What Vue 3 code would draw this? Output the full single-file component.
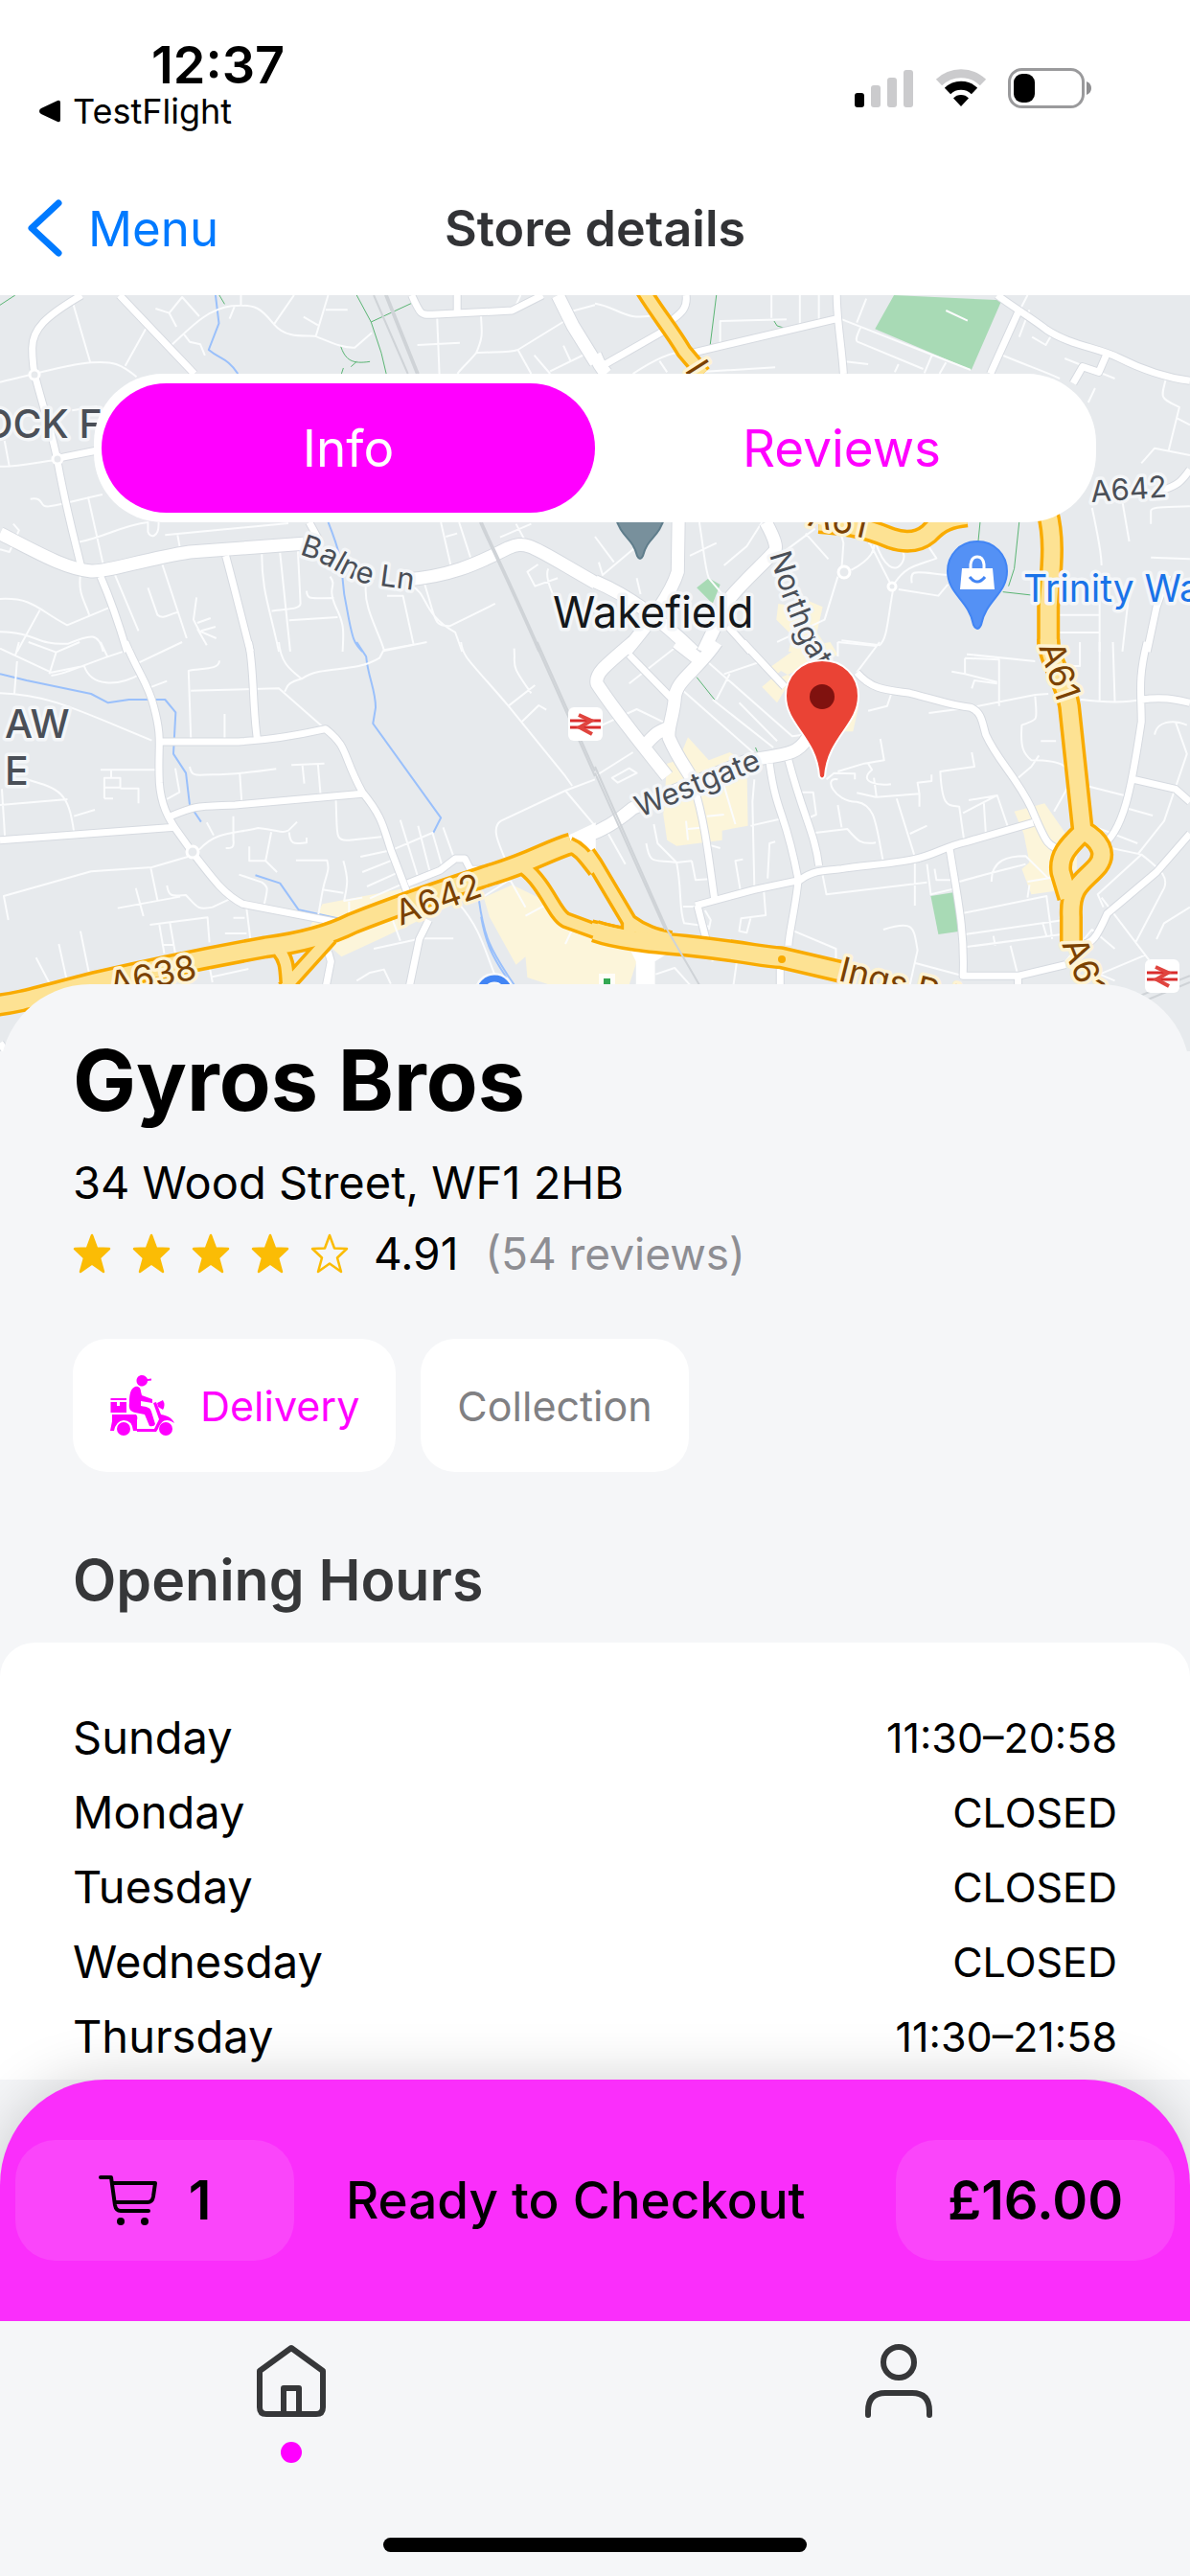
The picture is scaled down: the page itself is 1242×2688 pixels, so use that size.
<template>
  <div class="page">
    <header class="status-bar">
      <div class="status-left">
        <div class="clock">12:37</div>
        <a class="back-app" href="#">
          <svg width="24" height="24" viewBox="0 0 24 24"><path d="M1 12Q1 10 3 9L20 1Q23 0 23 3V21Q23 24 20 23L3 15Q1 14 1 12Z" fill="#000" /></svg>
          TestFlight
        </a>
      </div>
      <div class="status-icons">
        <svg width="62" height="42" viewBox="0 0 62 42">
          <rect x="0" y="26" width="10" height="15" rx="3" fill="#000" />
          <rect x="17" y="18" width="10" height="23" rx="3" fill="#cbcbcd" />
          <rect x="34" y="10" width="10" height="31" rx="3" fill="#cbcbcd" />
          <rect x="51" y="2" width="10" height="39" rx="3" fill="#cbcbcd" />
        </svg>
        <svg width="54" height="42" viewBox="0 0 54 42" fill="none">
          <path d="M4 15A33 33 0 0 1 50 15" stroke="#cbcbcd" stroke-width="9" />
          <path d="M13 24A20 20 0 0 1 41 24" stroke="#000" stroke-width="9" />
          <path d="M27 40L19 31.500A11 11 0 0 1 35 31.500Z" fill="#000" />
        </svg>
        <svg width="88" height="44" viewBox="0 0 88 44">
          <rect x="1.500" y="2.500" width="77" height="39" rx="13" fill="none" stroke="#9a9a9c" stroke-width="3" />
          <rect x="6" y="7" width="22" height="30" rx="9" fill="#000" />
          <path d="M82 15Q87 17 87 22Q87 27 82 29Z" fill="#8e8e90" />
        </svg>
      </div>
    </header>

    <nav class="nav-bar">
      <a class="nav-back" href="#">
        <svg width="36" height="60" viewBox="0 0 36 60"><path d="M32 4L4 30L32 56" fill="none" stroke="#007aff" stroke-width="7" stroke-linecap="round" stroke-linejoin="round" /></svg>
        Menu
      </a>
      <h1 class="nav-title">Store details</h1>
    </nav>

    <section class="map">
      <svg class="map-canvas" viewBox="0 0 1242 789" preserveAspectRatio="xMidYMin slice">
        <g v-for="(tile, i) in tiles" :key="'area' + i" :transform="tile.at">
          <path :d="tile.shops" fill="#fcf5da" />
          <path :d="tile.parks" fill="#a8dab5" />
          <path :d="tile.water" class="line water" />
          <path :d="tile.paths" class="line path" />
          <path :d="tile.minor" class="line minor" />
        </g>
        <g v-for="(tile, i) in tiles" :key="'edge' + i" :transform="tile.at">
          <path :d="tile.streets" class="line street-edge" />
          <path :d="tile.avenues" class="line avenue-edge" />
        </g>
        <g v-for="(tile, i) in tiles" :key="'street' + i" :transform="tile.at">
          <path :d="tile.streets" class="line street" />
          <path :d="tile.avenues" class="line avenue" />
          <path :d="tile.blocks" fill="#fff" />
        </g>
        <g v-for="(tile, i) in tiles" :key="'casing' + i" :transform="tile.at">
          <path :d="tile.slips" class="line slip-edge" />
          <path :d="tile.mains" class="line main-edge" />
        </g>
        <g v-for="(tile, i) in tiles" :key="'main' + i" :transform="tile.at">
          <path :d="tile.slips" class="line slip" />
          <path :d="tile.mains" class="line main" />
          <path :d="tile.rail" class="line rail" />
        </g>

        <!-- roundabouts -->
        <g fill="#e7eaed" stroke="#fff" stroke-width="3">
          <circle cx="36" cy="83" r="5" />
          <circle cx="60" cy="171" r="5" />
          <circle cx="201" cy="581" r="6" />
          <circle cx="881" cy="289" r="6" />
          <circle cx="931" cy="304" r="4" />
        </g>
        <circle cx="816" cy="693" r="4" fill="#f9ab00" />

        <g class="labels">
          <text x="-18" y="149" class="district">OCK F</text>
          <text x="5" y="462" class="district">AW</text>
          <text x="5" y="511" class="district">E</text>
          <path id="balne" d="M312 271C340 276 358 298 388 302L440 309" fill="none" />
          <text class="street-name"><textPath href="#balne">Balne Ln</textPath></text>
          <path id="northgate" d="M803 271L817 316L834 360L858 400" fill="none" />
          <text class="street-name"><textPath href="#northgate">Northgate</textPath></text>
          <text transform="translate(1139 216) rotate(-4)" class="street-name">A642</text>
          <text transform="translate(668 545) rotate(-22)" class="street-name">Westgate</text>
          <text transform="translate(714 78) rotate(58)" class="road-name">Leeds Rd</text>
          <text transform="translate(842 240) rotate(13)" class="road-name">A61</text>
          <text transform="translate(1084 367) rotate(71)" class="road-name">A61</text>
          <text transform="translate(1108 677) rotate(68)" class="road-name">A61</text>
          <text transform="translate(418 658) rotate(-20)" class="road-name">A642</text>
          <text transform="translate(117 732) rotate(-12)" class="road-name">A638</text>
          <text transform="translate(874 715) rotate(14)" class="road-name">Ings Rd</text>
          <text x="577" y="347" class="town">Wakefield</text>
          <text x="1068" y="320" class="place">Trinity Walk</text>
        </g>

        <!-- railway stations -->
        <g v-for="s in stations" :key="s" :transform="s">
          <rect width="36" height="35" rx="6" fill="#fff" />
          <path d="M2 14H34M2 21H34" stroke="#d92c2c" stroke-width="3" />
          <path d="M11 8L24 14L12 21L25 28" fill="none" stroke="#e0443e" stroke-width="4" />
        </g>

        <circle cx="516" cy="728" r="21" fill="#fff" opacity="0.700" />
        <circle cx="516" cy="728" r="15" fill="none" stroke="#4285f4" stroke-width="7" />
        <rect x="625" y="708" width="17" height="17" fill="#fff" opacity="0.800" />
        <rect x="630" y="713" width="7" height="8" fill="#34a853" />

        <path d="M642 230H694C688 254 676 252 671 272Q668 278 665 272C660 252 648 254 642 230Z" fill="#78909c" stroke="#5f7d8b" stroke-width="2" />

        <path d="M1020 257C1038 257 1051 271 1051 288C1051 312 1029 318 1024 344Q1020 352 1016 344C1011 318 989 312 989 288C989 271 1002 257 1020 257Z" fill="#5491f5" stroke="#4285f4" stroke-width="2" />
        <path d="M1004 285H1036L1038 307H1002Z" fill="#fff" />
        <path d="M1013 286V281Q1014 273 1020 273Q1026 273 1027 281V286" fill="none" stroke="#fff" stroke-width="3" />
        <path d="M1012 294Q1020 304 1028 294" fill="none" stroke="#4285f4" stroke-width="3" />

        <path d="M858 381C880 381 896 397 896 418C896 449 864 461 861 502Q858 507 855 502C852 461 820 449 820 418C820 397 836 381 858 381Z" fill="#ea4335" stroke="#fff" stroke-width="2" />
        <circle cx="858" cy="419" r="13" fill="#80120f" />
      </svg>

      <div class="tabs">
        <button
          v-for="tab in tabs"
          :key="tab"
          type="button"
          class="tab"
          :class="{ active: tab === activeTab }"
          @click="activeTab = tab"
        >{{ tab }}</button>
      </div>
    </section>

    <main class="sheet">
      <div class="store">
        <h2 class="store-name">Gyros Bros</h2>
        <p class="address">34 Wood Street, WF1 2HB</p>
        <div class="rating">
          <div class="stars">
            <svg v-for="n in 5" :key="n" width="40" height="42" viewBox="0 0 40 42">
              <path
                d="M20 2L25 15.500L38 16L28 25.500L32 40L20 31.500L8 40L12 25.500L2 16L15 15.500Z"
                :fill="n < 5 ? '#fbbc05' : 'none'"
                stroke="#fbbc05"
                stroke-width="2.500"
                stroke-linejoin="round"
              />
            </svg>
          </div>
          <span class="score">4.91</span>
          <span class="count">(54 reviews)</span>
        </div>
        <div class="chips">
          <button type="button" class="chip chip-active">
            <svg width="70" height="64" viewBox="0 0 70 64" fill="#f0f">
              <path d="M34 0C37 0 39 2 40 4L44 3.500V5.500L40 6C40 9 37 11.500 34 11.500C31 11.500 28.500 9 28.500 5.700S31 0 34 0Z" />
              <path d="M27 12C31 11 33 14 33 17L34 21L45 25L45 29L33 27V32C40 33 43 34 44 38L48 51Q47 54 42 53L37 41L27 39C22 38 20 35 21 29C21 20 22 14 27 12Z" />
              <path d="M46 29L49 28L54 41C61 42 66 45 68 50C60 44 54 47 51 56L49 59H29V56H47L52 46Z" />
              <path d="M50 29L56 26Q59 31 56 36L51 33Z" />
              <path d="M1.500 24H18V26H1.500ZM1.500 28H8V32H11V28H18V39H1.500Z" />
              <path d="M3 41H28Q30 43 29 47V58H25Q24 47 15 47Q7 48 5 58H1L3 48Z" />
              <circle cx="15" cy="56" r="7" />
              <circle cx="59" cy="56" r="7" />
            </svg>
            Delivery
          </button>
          <button type="button" class="chip">Collection</button>
        </div>
        <h3 class="hours-title">Opening Hours</h3>
      </div>

      <div class="hours-card">
        <table class="hours">
          <tbody>
            <tr v-for="row in hours" :key="row.day">
              <th scope="row">{{ row.day }}</th>
              <td>{{ row.time }}</td>
            </tr>
          </tbody>
        </table>
      </div>

      <button type="button" class="checkout">
        <span class="checkout-box">
          <svg width="62" height="54" viewBox="0 0 62 54" fill="none" stroke="#000" stroke-width="4" stroke-linecap="round" stroke-linejoin="round">
            <path d="M2 3H13L17 32Q18 38 23 38H52" />
            <path d="M14 9H59L57 23Q56 29 51 29H17" />
            <circle cx="23" cy="49" r="4" fill="#000" stroke="none" />
            <circle cx="48" cy="49" r="4" fill="#000" stroke="none" />
          </svg>
          1
        </span>
        <span class="checkout-label">Ready to Checkout</span>
        <span class="checkout-box">£16.00</span>
      </button>
    </main>

    <footer class="tab-bar">
      <div class="tab-links">
        <a href="#" aria-label="Home">
          <svg width="72" height="78" viewBox="0 0 72 78" fill="none" stroke="#363739" stroke-width="6" stroke-linejoin="round">
            <path d="M3 28L36 4L69 28V66Q69 73 62 73H10Q3 73 3 66Z" />
            <path d="M28 73V46H44V73" />
          </svg>
          <span class="dot"></span>
        </a>
        <a href="#" aria-label="Account">
          <svg width="72" height="78" viewBox="0 0 72 78" fill="none" stroke="#363739" stroke-width="6" stroke-linecap="round">
            <circle cx="36" cy="19" r="16" />
            <path d="M4 74V70Q4 51 22 51H50Q68 51 68 70V74" />
          </svg>
        </a>
      </div>
      <div class="home-indicator"></div>
    </footer>
  </div>
</template>

<script setup>
import { ref } from 'vue'

const tabs = ['Info', 'Reviews']
const activeTab = ref('Info')

const hours = [
  { day: 'Sunday', time: '11:30–20:58' },
  { day: 'Monday', time: 'CLOSED' },
  { day: 'Tuesday', time: 'CLOSED' },
  { day: 'Wednesday', time: 'CLOSED' },
  { day: 'Thursday', time: '11:30–21:58' },
]

const stations = ['translate(593 430)', 'translate(1195 693)']

// the map is cut into four tiles, each drawn in its own 1568 x 1140 grid
const tiles = [
  {
    at: 'translate(0 -8) scale(0.396 0.3333)',
    water: 'M568 24L577 112L550 195C580 225 600 220 627 270 M865 735C920 900 890 880 915 1010C930 1110 935 1115 955 1140',
    paths: 'M0 55L40 24 M940 24L978 108L1087 48 M978 108L1005 205L1018 270 M897 180C910 230 930 240 975 232 M940 232L925 248 M905 252L900 270 M578 24L592 52',
    minor: 'M192 48L238 235 M0 296C80 275 180 240 240 235S320 240 360 280 M330 245L384 130 M410 66L446 80L480 30L525 90 M446 80L465 123 M445 188C500 130 540 70 610 58C680 50 690 70 722 115S800 150 830 152C870 170 900 190 935 188L980 142 M722 115L775 24 M800 92L838 118 M833 150L865 24 M858 70H916 M635 24V55 M484 145L500 170L528 178L540 213 M605 98L618 60 M1100 180L1212 173 M1152 90L1158 270 M1267 80C1270 140 1275 150 1255 205C1230 240 1210 260 1206 270 M1255 205C1290 200 1340 206 1365 195L1488 105 M1365 195L1400 270 M1360 55L1372 24 M1408 212L1450 270 M1485 182L1503 228 M1540 210L1450 262 M1505 75L1568 55 M12 480L25 562 M0 560C60 562 100 545 150 540 M80 662C120 655 100 690 130 685C180 675 220 660 270 648 M190 385L256 372 M232 655L272 868 M208 797C280 780 320 745 390 735V765C395 785 420 785 418 735 M435 775L760 738 M468 775L475 820 M0 820L25 828L50 760L35 740 M303 900L365 1075 M428 868L492 1098 M390 940L415 1025C430 1040 440 1025 467 1017 M212 900C205 960 225 985 235 1025 M0 975C90 970 100 1010 177 1057L292 1000 M105 1010L45 1140 M0 1078C100 1080 90 1120 180 1115C240 1085 260 1080 272 1140 M518 970L510 1040L525 1075 M520 1050L555 1035 M530 1075L568 1062 M525 1075L570 1098 M520 1068L545 1120 M690 835C690 950 710 1000 735 1140 M738 830L765 1140 M785 820L792 990C790 1010 750 1005 716 1013 M762 1042L890 1032 M808 950C810 980 820 972 880 972 M870 905C890 940 860 930 885 1000C910 1060 905 1080 903 1140 M965 925C955 1000 1000 1080 1012 1135L1090 1118L1062 965H1020 M1118 925C1150 1040 1140 1060 1185 1060L1305 990 M1085 935C1130 960 1110 1020 1200 1080L1218 1140 M1162 735L1188 870 M1210 735L1240 845 M1175 780L1205 770 M1318 782L1400 740 M1360 740L1385 795 M1418 867L1390 890L1410 935L1470 910 M1445 880C1430 920 1480 1010 1500 1060',
    streets: 'M215 24C120 90 85 130 85 190C85 230 90 270 93 280C120 400 140 470 150 535C175 700 195 780 215 880 M315 24L512 270 M150 535L256 510 M265 905C300 1000 320 1080 335 1140 M595 840C620 950 640 1050 660 1140 M815 735L845 800 M1085 24C1110 90 1110 85 1140 85L1350 72L1430 24 M1205 24V72',
    avenues: 'M0 770C100 830 170 880 240 888C280 892 380 850 500 828L800 802 M1070 915C1180 905 1250 870 1340 815C1390 790 1400 810 1570 925 M1470 24L1510 120L1570 235',
    rail: 'M985 24L1075 270 M1015 24L1098 270 M1020 24L1103 270 M1265 735C1300 830 1320 870 1420 1140 M1270 735C1305 830 1325 870 1425 1140',
  },
  {
    at: 'translate(621 -8) scale(0.396 0.3333)',
    shops: 'M540 970L600 1000L585 1080L620 1140H510L520 1090L478 1040L483 990L540 1000Z',
    parks: 'M788 24L1072 40L992 258L738 130Z M300 910L330 930L310 990L268 940Z',
    paths: 'M320 24L303 185 M472 105L480 120L508 130 M1015 735L1010 795 M1118 735L1105 880L1090 935 M1075 953L1165 965',
    minor: 'M925 72L982 104 M0 50C60 60 80 110 160 85 M330 180V105L505 100 M465 24V95 M540 24V120 M590 24V105 M715 35L690 110 M640 95L990 258 M700 125C690 150 685 165 692 170L865 255 M660 232L720 240 M170 230L190 265 M100 270C150 230 200 200 240 200 M270 265L475 250 M800 240L790 265 M888 212L868 268 M925 235L908 270 M1070 210C1150 250 1180 260 1225 285 M1145 70L1118 155 M1152 155L1188 180L1205 145 M1140 24L1120 70 M1238 222L1370 285 M1505 285C1490 350 1490 345 1540 375L1512 510 M1535 410L1568 430 M1318 315L1300 360 M1440 550L1475 503L1568 525 M1390 670L1408 795 M1310 690C1330 800 1335 850 1335 870 M1465 740V700C1465 685 1500 688 1568 685 M1465 845L1568 850 M0 780L50 860 M10 860L20 900L130 790 M110 910L120 960 M275 735C290 850 290 880 300 910L350 980 M440 735L400 810L340 870 M250 840L320 800 M555 770L615 850 M495 830L580 755 M640 735L655 800L650 880 M640 905L605 1040L480 1110 M675 885C730 850 740 820 735 790 M705 755L780 930 M720 800C780 790 830 820 810 860S760 870 740 800 M790 925C820 870 850 870 900 848L870 795 M800 945L905 965L930 930 M785 950C770 1050 770 1100 750 1120L650 1105 M835 925C830 880 840 890 930 900 M1225 1025H1330 M1330 900V1140 M1225 1080H1330 M1410 930L1390 1140',
    streets: 'M240 24C245 70 220 85 200 105 M190 130L20 245 M255 205L640 97 M637 24C637 100 650 180 655 270 M1060 24C1100 60 1150 95 1190 132C1250 180 1330 190 1380 220S1490 280 1568 292 M1118 70L1042 270 M1260 300L1285 248L1328 265L1348 210 M350 1060L410 1140 M1510 900L1480 1000L1455 1140 M1490 636C1540 620 1550 600 1568 570',
    avenues: 'M0 210C10 240 15 250 30 270 M220 735L218 890C200 960 150 1040 80 1140 M450 735C480 800 480 820 470 830C440 870 390 920 350 980L285 1140 M0 920C60 950 150 1010 260 1140',
    slips: 'M128 10C170 90 200 130 235 200L285 270',
    mains: 'M1192 700C1215 800 1200 900 1195 1000V1140 M590 735C650 740 700 745 780 785C830 805 860 790 880 770C910 730 940 720 980 715',
  },
  {
    at: 'translate(0 362) scale(0.396 0.3333)',
    shops: 'M1275 800L1350 760L1420 800L1470 880L1570 920V1073H1450L1390 1050L1385 985L1360 1010L1290 860Z M850 820L1250 730V790L1000 930L900 985L815 895Z',
    water: 'M0 100L70 120L240 162L285 190L340 180H435L463 220L457 350L490 410L500 510L530 563 M940 0L965 45C970 110 990 150 990 205L983 255L1162 550L1142 597 M673 730L738 755L787 838L920 873 M1262 805C1275 920 1290 960 1355 1073 M1268 860C1280 940 1295 980 1335 1050',
    minor: 'M0 20L135 95L220 75 M50 0L40 45 M45 60L38 160 M75 0L148 32L130 100 M148 32L210 0 M265 0L283 45 M135 105C180 100 200 75 350 20 M222 75C240 140 310 140 370 100 M365 65L480 0 M395 142L440 122 M0 160C130 165 200 210 400 308 M503 300L497 90C520 80 580 90 578 58 M503 152L735 145L855 270 M592 225V305 M735 0C740 70 770 90 795 115C750 130 760 140 750 155 M795 115C850 70 930 100 1000 50L1010 28L1125 0 M1215 0C1220 50 1240 60 1340 200L1490 420L1508 450 M1340 200L1410 135 M1355 20C1360 80 1340 60 1400 160 M1375 250L1420 198L1440 212 M1568 430L1490 465L1320 560C1295 580 1310 620 1335 690 M1490 465L1568 575 M265 400H415 M293 400V425 M275 490V425H317V455H275 M317 458H365V505 M275 490H298 M462 395L473 470L440 492 M500 390C505 425 520 415 560 415S650 410 728 397 M632 412L637 500 M768 385L855 380 M797 385L802 443 M838 382L845 480 M0 510L178 492 M70 430C160 460 180 470 195 595 M195 545L250 525 M5 460L13 610 M525 650C570 590 620 600 680 582C740 590 740 600 760 590L783 563 M615 545V620C618 645 610 645 595 645 M545 565L563 605 M762 595C765 640 780 630 808 628V612 M715 595L700 685H657V640 M700 685L730 720 M885 490C890 600 880 625 920 620L1005 610 M780 683H862C870 720 860 720 850 780L838 860 M905 685C920 750 915 760 907 810L955 800 M850 775L905 785 M920 812V870 M630 728L690 752C710 770 705 770 695 830 M495 672L400 705L240 718L10 795L22 870 M397 705L415 808 M310 833L475 797 M358 770L378 858 M440 762C445 800 455 795 490 792C520 830 520 840 560 830L610 802 M395 885L547 862L552 940 M650 835L663 960 M593 912H650 M615 863H645 M420 885L433 975 M448 880L462 975 M430 948H458 M95 988L140 1090 M155 945L180 1080 M212 905L240 1068 M552 1015L560 1065 M560 1048L655 1023 M950 672L1030 652 M955 720L1035 682 M967 765L1048 722 M975 802L1065 755 M1055 557L1100 730 M1035 650L1140 597L1165 700 M1102 575L1132 715 M1168 580L1198 680 M985 840L1060 810 M985 960L1110 928H1195 M1035 870L1055 935 M1210 820C1270 900 1280 980 1315 1073 M1270 800L1355 735 M1340 735L1385 830 M1385 857L1435 825 M1490 945L1510 895 M940 1060L975 1035L1012 1025L1030 1070',
    streets: 'M330 0C370 110 390 130 405 200C430 310 415 320 420 440C425 520 450 560 460 580L505 655C560 740 590 790 640 820L880 875L900 890 M655 0C670 80 665 200 678 305 M422 312H610C700 310 790 290 858 272C920 330 900 350 955 470C1010 550 1010 580 1030 650L1075 790 M450 545C520 510 520 515 620 510L955 475 M0 620L460 580 M1075 755L1160 715L1200 678H1225L1240 712H1310 M865 970L872 1000L860 1073 M1130 870L1105 930L1080 1073 M0 1255L25 1300',
    blocks: 'M1480 615L1570 565V665Z',
    slips: 'M1380 705C1440 760 1460 850 1490 870L1570 905 M735 965C760 1000 755 1030 760 1085 M870 925L775 1050L750 1085 M1500 635C1530 650 1540 670 1570 715',
    mains: 'M-20 1138C50 1130 100 1110 250 1065C450 1010 560 985 700 955C800 940 880 910 930 880C1100 800 1250 745 1300 725C1400 690 1450 650 1505 632',
    rail: 'M1410 0L1568 420 M1416 0L1568 404',
  },
  {
    at: 'translate(621 362) scale(0.396 0.3333)',
    shops: 'M245 298L300 370L355 345L400 375L403 575L335 590V620L215 638L190 620L180 540L190 380L220 370Z M1105 530L1185 505L1235 590L1270 660V710L1210 780L1150 790L1125 710L1145 690L1130 600Z M440 140L480 190L520 110L490 90Z M460 80L530 20L620 0L640 40L490 110Z M640 230L695 200L680 280L655 280Z M0 930L100 950L110 1000L90 1073H0Z',
    parks: 'M885 795L948 783L962 905L905 915Z',
    paths: 'M268 110L315 180 M423 330L430 350',
    minor: 'M0 270L110 210L180 250 M90 130L230 0 M0 420L100 345 M45 425L90 395L110 410L60 440Z M300 65L520 295L548 290 M230 150L440 370 M310 180L470 330 M355 100L320 180 M440 60L340 100 M380 190L480 310 M640 0V45 M750 0L690 95 M640 0L740 12 M980 38L1160 60 M975 50L1065 55V200 M975 50V100L1060 125 M940 92L975 100 M993 145L1000 120L1060 130 M880 222L990 205L1160 165L1195 162 M1278 0V75H1250 M1365 0L1370 185 M1330 0V185 M1280 180C1350 190 1400 190 1440 180 M1160 170C1165 250 1170 240 1125 260C1120 330 1130 350 1150 370C1240 370 1250 390 1253 440L1210 530 M1175 310H1215 M1170 355L1150 390L1115 425 M752 303L762 370L710 380L640 405 M720 380L730 400C690 440 750 450 780 445 M735 425L742 485L855 475 M690 472L740 485 M640 430C600 420 630 500 690 500C740 510 740 570 760 690 M640 510L650 580 M575 598L665 585C690 620 700 635 740 628 M720 215L770 200L780 165 M610 430L630 410L685 412V430 M795 490L845 680 M830 600L875 575 M855 515V475L850 440L887 435V415 M993 345L1000 390L910 405C915 520 930 510 960 515L972 615 M970 535L1060 480L1088 578 M985 495L1060 480 M1025 505L1030 600 M545 470H575L583 540L560 552 M410 575L495 552 M420 430L415 500L420 765 M340 450L370 570 M240 560L245 620 M245 585L290 580 M295 545L340 540 M300 635L330 645 M135 630C145 700 155 680 215 690L255 685 M155 570L165 630L215 690C230 780 220 830 235 880L300 890 M255 685L265 745L300 742 M390 680L370 685L385 790 M475 625L460 630L455 740 M35 600L80 695 M232 828H270 M290 840L305 870L300 900 M410 865L400 910L380 905L385 865L450 855L445 780 M600 730L610 790L875 752 M843 685V825 M875 695L885 790L955 770 M895 710L900 745H950 M960 750C1050 720 1090 710 1135 695 M1045 750C1045 680 1090 670 1135 670L1195 740 M1140 750L1215 735 M965 850L1190 795L1205 930 M1145 760L1140 800 M975 915L1235 870 M975 955L1230 915 M1050 920L1055 950 M1095 950L1115 1045 M1180 880L1190 920 M760 900C840 870 840 890 850 965L830 1073 M845 1005L970 1045 M525 905L635 960V1000 M1340 640L1440 665C1500 720 1510 740 1500 770L1425 940 M1335 800L1460 995 M1340 830L1325 790L1440 665 M1400 520L1470 543 M1310 575L1430 630 M1295 450L1395 480 M1370 1060L1330 1040L1450 980 M1480 930L1500 880L1568 830 M1530 250L1560 350L1500 560L1430 665 M1475 290C1480 250 1520 240 1560 260 M1240 1000L1310 900L1370 960 M160 1040L210 1020L250 1073 M375 990L365 1073 M300 945L310 1000',
    streets: 'M90 40L205 180 M390 0L500 140 M690 95C730 150 770 150 830 160C900 180 940 200 990 205C1020 220 1020 250 1030 290C1060 370 1110 420 1150 520C1190 630 1190 640 1240 655 M1455 0C1430 120 1440 160 1440 250C1420 400 1400 600 1330 640 M1440 180C1500 170 1530 180 1568 190 M1420 430L1530 460L1568 500 M1568 600L1480 720L1350 850C1320 930 1310 940 1290 945 M460 380C480 550 500 520 535 740 M510 370C550 550 580 600 590 700 M265 825L420 775L540 745C580 710 620 715 650 710C700 700 780 695 840 680C900 665 920 640 980 625L1155 565 M535 750C530 820 510 920 510 950 M488 1020V1080 M270 825L295 940 M935 650C955 800 975 900 970 1045H1115L1240 1010 M1115 1045V1073 M260 450C290 560 300 680 315 805',
    avenues: 'M100 0C20 80 0 100 5 130C60 230 130 330 190 420 M215 0L280 60 M320 0C270 90 210 120 210 180C205 240 190 270 195 300C220 370 250 410 265 450 M200 265C160 280 150 300 130 325 M560 300C530 360 490 350 400 372L100 520C60 560 20 590 -20 605',
    blocks: 'M85 945L205 965L158 1000V1080H108V1000Z',
    slips: 'M-20 660L0 695L90 875V935 M-10 895L100 925 M90 875C130 910 160 920 200 930',
    mains: 'M0 905C60 930 150 940 240 950C400 970 440 985 490 988L660 1035 M1195 -10C1195 60 1240 120 1250 200L1285 590C1330 620 1350 660 1325 700C1290 750 1250 760 1255 860V960 M1285 595C1245 640 1222 670 1228 720L1248 800',
    rail: 'M0 390L190 900L275 1073 M0 410L185 900 M1430 1110L1568 1045 M1445 1125L1568 1065',
  },
]
</script>

<style>
body {
  background: #f5f6f8;
}
</style>

<style scoped>
.page {
  display: flex;
  flex-direction: column;
  min-height: 100vh;
  font-family: "Inter", "Liberation Sans", sans-serif;
  color: #000;
  background: #f5f6f8;
}
a {
  color: inherit;
  text-decoration: none;
}
button {
  border: 0;
  padding: 0;
  font: inherit;
  color: inherit;
  cursor: pointer;
}
h1,
h2,
h3,
p {
  margin: 0;
}

/* status bar */
.status-bar {
  display: flex;
  justify-content: space-between;
  align-items: flex-start;
  height: 128px;
  padding: 40px 102px 0 40px;
  background: #fff;
}
.clock {
  padding-left: 118px;
  font-size: 54px;
  font-weight: 600;
  line-height: 56px;
}
.back-app {
  display: flex;
  align-items: center;
  gap: 12px;
  font-size: 36px;
  line-height: 40px;
}
.status-icons {
  display: flex;
  align-items: center;
  gap: 22px;
  padding-top: 30px;
}

/* navigation bar */
.nav-bar {
  display: grid;
  grid-template-columns: 1fr auto 1fr;
  align-items: center;
  height: 140px;
  padding: 0 29px;
  background: #fff;
}
.nav-back {
  display: flex;
  align-items: center;
  gap: 27px;
  font-size: 51px;
  color: #007aff;
}
.nav-title {
  font-size: 52px;
  font-weight: 600;
  color: #323336;
}

/* map */
.map {
  position: relative;
  height: 707px;
  padding: 82px 98px 0;
  background: #e7eaed;
  overflow: hidden;
}
.map-canvas {
  position: absolute;
  inset: 0;
  width: 100%;
  height: 100%;
}
.line {
  fill: none;
  vector-effect: non-scaling-stroke;
  stroke-linejoin: round;
}
.water {
  stroke: #9ac0fb;
  stroke-width: 2px;
}
.path {
  stroke: #5bb574;
  stroke-width: 1px;
}
.minor {
  stroke: #fbfcfd;
  stroke-width: 2px;
}
.street-edge {
  stroke: #d6dae0;
  stroke-width: 9px;
}
.street {
  stroke: #fff;
  stroke-width: 7px;
}
.avenue-edge {
  stroke: #d6dae0;
  stroke-width: 15px;
}
.avenue {
  stroke: #fff;
  stroke-width: 13px;
}
.slip-edge {
  stroke: #f9ab00;
  stroke-width: 18px;
}
.slip {
  stroke: #fde293;
  stroke-width: 11px;
}
.main-edge {
  stroke: #f9ab00;
  stroke-width: 24px;
}
.main {
  stroke: #fde293;
  stroke-width: 17px;
}
.rail {
  stroke: #cfd3d7;
  stroke-width: 2px;
}
.labels text {
  paint-order: stroke;
  stroke: #f4f6f8;
  stroke-width: 7px;
  stroke-linejoin: round;
}
.labels .district {
  font-size: 41px;
  font-weight: 500;
  fill: #4a4f57;
}
.labels .street-name {
  font-size: 31px;
  fill: #4a4f57;
}
.labels .road-name {
  font-size: 36px;
  fill: #7a4100;
  stroke: #fef3d3;
}
.labels .town {
  font-size: 45px;
  fill: #15181b;
}
.labels .place {
  font-size: 39px;
  fill: #1a73e8;
}
.tabs {
  position: relative;
  display: flex;
  padding: 10px 8px;
  border-radius: 72px;
  background: #fff;
}
.tab {
  flex: 1;
  height: 135px;
  border-radius: 68px;
  font-size: 53px;
  color: #f0f;
  background: #fff;
}
.tab.active {
  color: #fff;
  background: #f0f;
}

/* sheet */
.sheet {
  position: relative;
  margin-top: -70px;
  border-radius: 94px 94px 0 0;
  background: #f5f6f8;
}
.store {
  padding: 46px 76px 25px;
}
.store-name {
  font-size: 88px;
  font-weight: 700;
  line-height: 108px;
}
.address {
  margin-top: 17px;
  font-size: 47px;
  line-height: 72px;
}
.rating {
  display: flex;
  align-items: center;
  margin-top: 6px;
  font-size: 46px;
  line-height: 64px;
}
.stars {
  display: flex;
  gap: 22px;
}
.score {
  margin-left: 26px;
}
.count {
  margin-left: 28px;
  color: #8e8e93;
}
.chips {
  display: flex;
  gap: 26px;
  margin-top: 57px;
}
.chip {
  display: flex;
  align-items: center;
  gap: 25px;
  height: 139px;
  padding: 0 38px;
  border-radius: 36px;
  font-size: 43px;
  color: #808083;
  background: #fff;
}
.chip-active {
  color: #f0f;
}
.hours-title {
  margin-top: 73px;
  font-size: 59px;
  font-weight: 600;
  line-height: 80px;
  color: #363739;
}
.hours-card {
  padding: 60px 76px 6px;
  border-radius: 36px 36px 0 0;
  background: #fff;
}
.hours {
  width: 100%;
  border-collapse: collapse;
  line-height: 78px;
}
.hours th {
  padding: 0;
  font-size: 47px;
  font-weight: 400;
  text-align: left;
}
.hours td {
  padding: 0;
  font-size: 43px;
  text-align: right;
}

/* checkout */
.checkout {
  display: flex;
  align-items: center;
  width: 100%;
  padding: 63px 16px;
  border-radius: 110px 110px 0 0;
  background: #fa2efb;
  box-shadow: 0 0 60px rgba(0, 0, 0, 0.18);
}
.checkout-box {
  display: flex;
  align-items: center;
  justify-content: center;
  gap: 32px;
  width: 291px;
  height: 126px;
  border-radius: 42px;
  font-size: 56px;
  font-weight: 600;
  background: #fa45fa;
}
.checkout-label {
  margin: 0 auto 0 54px;
  font-size: 53px;
  font-weight: 500;
}

/* bottom bar */
.tab-bar {
  position: relative;
  display: flex;
  flex: 1;
  flex-direction: column;
  justify-content: space-between;
  align-items: center;
  padding: 24px 0 25px;
  background: #f5f6f8;
}
.tab-links {
  display: flex;
  gap: 26px;
  width: 100%;
}
.tab-links a {
  display: flex;
  flex: 1;
  flex-direction: column;
  align-items: center;
  gap: 24px;
}
.dot {
  width: 22px;
  height: 22px;
  border-radius: 50%;
  background: #f0f;
}
.home-indicator {
  width: 442px;
  height: 15px;
  border-radius: 8px;
  background: #000;
}
</style>
